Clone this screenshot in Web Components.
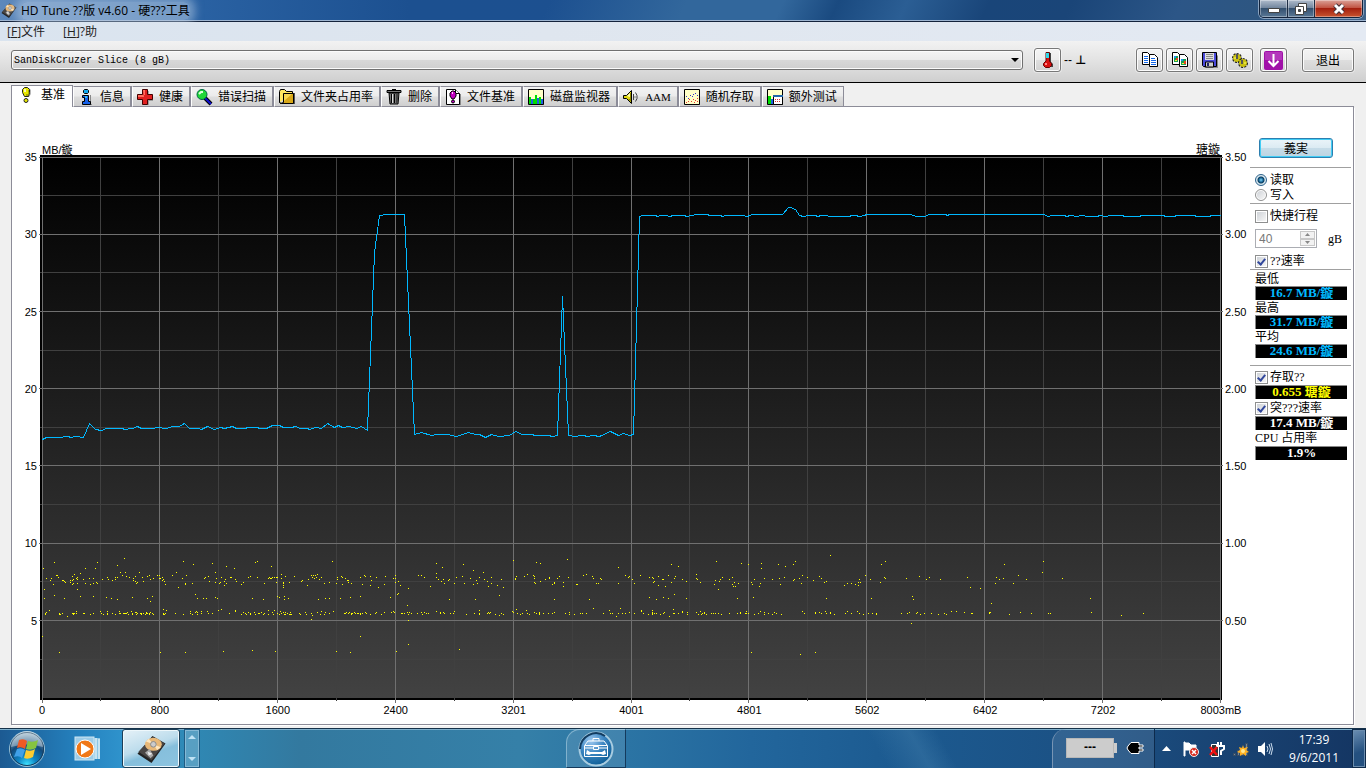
<!DOCTYPE html>
<html lang="zh-CN">
<head>
<meta charset="utf-8">
<title>HD Tune</title>
<style>
html,body{margin:0;padding:0}
body{background:#f0f0f0;font:12px/16px "Liberation Sans","Noto Sans CJK SC",sans-serif;color:#000}
</style>
</head>
<body>
<hd-window>
  <hd-titlebar slot="title">HD Tune ??版 v4.60 - 硬???工具</hd-titlebar>
  <hd-menu slot="menu"></hd-menu>
  <hd-toolbar slot="toolbar"></hd-toolbar>
  <hd-tabs slot="tabs"></hd-tabs>
  <hd-chart slot="chart"></hd-chart>
  <hd-side slot="side"></hd-side>
  <win-taskbar slot="taskbar"></win-taskbar>
</hd-window>
<script>
const define = (name, html, setup) => customElements.define(name, class extends HTMLElement {
  constructor() {
    super();
    this.attachShadow({ mode: "open" }).innerHTML = html;
  }
  connectedCallback() { if (setup) setup(this, this.shadowRoot); }
});

/* 16 x 16 icons */
const ICONS = {
  bang: '<path d="M8 1h3l2 2v4l-2 3H8L6 7V3z" fill="#888" opacity=".6"/><path d="M6.500 .5h3l2 2v3l-1 4h-4l-2-4v-3z" fill="#e8e800" stroke="#222"/><path d="M6 2h2v3H6z" fill="#fff" opacity=".7"/><path d="M10 3v4H8v2h2l1-4V3z" fill="#a8a800"/><circle cx="8" cy="13.500" r="2" fill="#e8e800" stroke="#222"/>',
  info: '<path d="M6 15h8v1H6zM12 6h1v8h-1z" fill="#888"/><path d="M6.500 .5h3l1 1v2l-1 1h-3l-1-1v-2z" fill="#10a8f0" stroke="#000"/><path d="M4.500 6.500h6v6h2v3h-8v-3h2v-4h-2z" fill="#1560e8" stroke="#000"/><path d="M7 7h2v2H7z" fill="#30c0ff"/>',
  plus: '<path d="M6 2h6v4h4v6h-4v4H6z" fill="#777" opacity=".6"/><path d="M5.500 .5h5v5h5v5h-5v5h-5v-5h-5v-5h5z" fill="#e02020" stroke="#400"/><path d="M6 1h2v5H1v2h6z" fill="#ff7060"/>',
  lens: '<path d="M8 8l7 7" stroke="#000" stroke-width="4"/><path d="M8 8l7 7" stroke="#1010d0" stroke-width="2"/><circle cx="6" cy="5.500" r="5" fill="#20d838" stroke="#064"/><path d="M3 5l2-2h2" stroke="#dfd" fill="none" stroke-width="2"/>',
  folder: '<path d="M4 15h12V4h-2z" fill="#555"/><path d="M.5 13.500v-11l1-2h4l2 2h6v2" fill="#ffe860" stroke="#000"/><path d="M.5 13.500l2 1h12v-10H4.500v9l-3 1z" fill="#d8a818" stroke="#000"/><path d="M5 5h8L5 12z" fill="#f8d850"/>',
  bin: '<path d="M1 1.500h14v2H1zM3 4h10l-1 11H4z" fill="#777" stroke="#000"/><path d="M6 0h4v1H6zM5 5h1v9H5zM8 5h1v9H8z"/><path d="M6 5h1v9H6z" fill="#ddd"/><path d="M10 5h2v9h-2z" fill="#444"/>',
  docbang: '<path d="M14 5h2v11H3v-1h11z" fill="#888"/><path d="M1.500 .5h9l4 4v11h-13z" fill="#fff" stroke="#000"/><path d="M10.500 .5v4h4" fill="#fff" stroke="#000"/><path d="M7 2h2l2 2v3l-2 3H7L5 7V4z" fill="#c000c0" stroke="#000"/><path d="M7 3h1v2H7z" fill="#fcf"/><circle cx="8" cy="12.500" r="1.500" fill="#c000c0" stroke="#000"/>',
  bars: '<path d="M3 16h13V3h-2z" fill="#999"/><path d="M.5 .5h15v15H.5z" fill="#ffffc8" stroke="#000"/><path d="M1 8h2v7H1zM5 10h3v5H5zM7 6h2v9H7zM11 8h2v7h-2z" fill="#0d0"/><path d="M3 10h2v5H3zM9 9h2v6H9zM13 10h2v5h-2z" fill="#2060e0"/>',
  horn: '<path d="M.5 6.500h3l5-5v13l-5-5h-3z" fill="#e0d810" stroke="#000"/><path d="M4 7l3-3v4z" fill="#ffa"/><path d="M7 4h1v9l-3-3h2z" fill="#908800"/><path d="M10.500 5v6M12.500 3.500l1.500 3v3l-1.500 3" stroke="#444" fill="none"/><path d="M12 7v2" stroke="#888"/>',
  dots: '<path d="M3 16h13V3h-2z" fill="#999"/><path d="M.5 .5h15v15H.5z" fill="#ffffc8" stroke="#000"/><path d="M2 7h1v1H2zM4 9h1v1H4zM6 6h1v1H6zM8 7h1v1H8zM11 4h1v1h-1zM13 6h1v1h-1zM9 5h1v1H9z" fill="#33c"/><path d="M2 13h1v1H2zM4 12h1v1H4zM7 12h1v1H7zM9 10h1v1H9zM11 11h1v1h-1zM13 9h1v1h-1zM10 13h1v1h-1zM5 10h1v1H5zM13 12h1v1h-1z" fill="#e33"/>',
  extra: '<path d="M3 16h13V3h-2z" fill="#999"/><path d="M.5 .5h15v15H.5z" fill="#ffffc8" stroke="#000"/><path d="M1 7h3v8H1z" fill="#0d0"/><path d="M4 10h2v5H4z" fill="#2060e0"/><path d="M6.500 6.500h9v9h-9z" fill="#fff" stroke="#000"/><path d="M6 6h10v2H6z" fill="#26a"/><path d="M8 10h1v1H8zM10 10h1v1h-1zM12 10h1v1h-1zM8 12h1v1H8zM10 12h1v1h-1zM12 12h1v1h-1z" fill="#d33"/>',
  thermo: '<path d="M8 1h3v9l2 2v3H8z" fill="#444"/><path d="M6 .5h3.500V9l2 2.500v2l-2 2h-4l-2-2v-2L6 9z" fill="#d81010" stroke="#600"/><path d="M6 1h3v5H6z" fill="#30d8e8"/><path d="M5 11h2v2H5z" fill="#f88"/>',
  copy: '<path d="M8 15h8V5z" fill="#888"/><path d="M.5 .5h5l2 2v10h-7zM7.500 2.500h5l3 3v9h-8z" fill="#fff" stroke="#000"/><path d="M2 4h4v1H2zM2 6h4v1H2zM2 8h4v1H2zM2 10h4v1H2zM9 6h4v1H9zM9 8h5v1H9zM9 10h5v1H9zM9 12h5v1H9z" fill="#1468e8"/>',
  copypic: '<path d="M8 15h8V5z" fill="#888"/><path d="M.5 .5h5l2 2v10h-7zM7.500 2.500h5l3 3v9h-8z" fill="#fff" stroke="#000"/><path d="M2 4h4v6H2zM9 7h5v6H9z" fill="#16a050"/><path d="M2 4h2v2H2zM9 7h2v2H9z" fill="#2090f0"/><path d="M4 6h2v2H4zM12 9h2v3h-2z" fill="#e84020"/><path d="M3 8h2v1H3zM10 11h2v1h-2z" fill="#fe3"/>',
  disk: '<path d="M2 16h14V3z" fill="#888"/><path d="M.5 .5h14v14h-13l-1-1z" fill="#4848d8" stroke="#000"/><path d="M3 1h9v7H3z" fill="#ddd"/><path d="M4 2h7v1H4zM4 4h7v1H4zM4 6h7v1H4z" fill="#888"/><path d="M3.500 10h8v5h-8z" fill="#ccc" stroke="#000"/><path d="M5 11h2v3H5z" fill="#226"/>',
  gear: '<g fill="#c8c010" stroke="#222"><circle cx="5" cy="6" r="4" stroke-dasharray="2 1" stroke-width="2"/><circle cx="5" cy="6" r="3.500" stroke="#c8c010"/><circle cx="11" cy="11" r="4" stroke-dasharray="2 1" stroke-width="2"/><circle cx="11" cy="11" r="3.500" stroke="#c8c010"/></g><path d="M5 2v5M10 8v4" stroke="#555" stroke-width="2"/><path d="M2 6h2M12 11h2" stroke="#ff6"/>'
};
customElements.define("px-icon", class extends HTMLElement {
  connectedCallback() {
    if (!this.shadowRoot) this.attachShadow({ mode: "open" });
    this.shadowRoot.innerHTML = `<style>:host{display:block;width:16px;height:16px;flex:none}svg{display:block;overflow:visible}</style><svg width="16" height="16" viewBox="0 0 16 16" aria-hidden="true">${ICONS[this.getAttribute("name")]}</svg>`;
  }
});

const DRIVE = '<path d="M1 20L17 1l14 8-15 21z" fill="#222"/><path d="M2 18L17 2l13 7-14 18z" fill="#4a4644"/><ellipse cx="18" cy="10" rx="9" ry="7" fill="#e8b878"/><path d="M18 10l-8-3 3-3zM18 10l8 3-4 3z" fill="#ffe6bc"/><circle cx="18" cy="10" r="3" fill="#ccc" stroke="#888"/><path d="M9 19l5-4 4 7-3 3z" fill="#aaa"/><path d="M12 18l5 2-4 2z" fill="#eee"/>';

define("hd-window", `<style>
:host{display:flex;flex-direction:column;min-height:100vh;background:#f0f0f0}
main{flex:1;display:flex;flex-direction:column;padding:2px 12px 3px 11px}
.panel{flex:1;display:flex;background:#fff;border:1px solid #8c8c98;border-top:0;box-shadow:1px 1px #fff}
::slotted([slot=chart]){flex:1;min-width:0}
</style><slot name="title"></slot><slot name="menu"></slot><slot name="toolbar"></slot>
<main><slot name="tabs"></slot><div class="panel"><slot name="chart"></slot><slot name="side"></slot></div></main>
<slot name="taskbar"></slot>`);

define("hd-titlebar", `<style>
:host{display:flex;align-items:center;height:22px;box-sizing:border-box;padding:0 3px 0 1px;gap:4px;border-bottom:1px solid #14233c;box-shadow:inset 0 -1px #9db4d0;
font:12px/18px "Open Sans","Noto Sans CJK TC",sans-serif;
background:linear-gradient(115deg,transparent 40%,#32679c 50%,#32679c 57%,#1a4a80 61%,#2b5e94 66%,#194579 72%,#1a4578 78%,#2c5687 86%,#2e5680 93%,#3f6288),linear-gradient(90deg,#5d88bc,#2a62a3 14%,#1c5090 30%,#1d5090)}
.name{flex:1;height:18px}
.name span{display:inline-block;background:rgba(190,210,232,.5);box-shadow:0 0 8px 5px rgba(190,210,232,.5);border-radius:6px;height:18px}
.btns{display:flex;align-self:flex-start;height:18px;box-sizing:border-box;border:1px solid #12233c;border-top:0;border-radius:0 0 5px 5px;overflow:hidden;box-shadow:0 0 0 1px #8ba3bf}
button{border:0;padding:0;margin:0;width:28px;border-right:1px solid #1c2c44;background:linear-gradient(#b0bccc,#73879f 45%,#34506f 50%,#5a7896);display:grid;place-items:center;box-shadow:inset 0 0 0 1px rgba(255,255,255,.35)}
button:nth-child(2){width:27px}
button.x{width:47px;border:0;background:linear-gradient(#dba298,#c25544 45%,#a4200f 50%,#c8542f)}
</style><svg width="16" height="16" viewBox="0 0 32 32">${DRIVE}</svg><div class="name"><span><slot></slot></span></div>
<div class="btns"><button aria-label="最小化"><svg width="12" height="12"><path d="M.5 5.500h11v4H.5z" fill="#fff" stroke="#444"/></svg></button><button aria-label="还原"><svg width="12" height="12"><path d="M3.500.5h8v8h-8z" fill="#fff" stroke="#444"/><path d="M.5 3.500h8v8h-8z" fill="#fff" stroke="#444"/><path d="M3.500 6.500h2v2h-2z" fill="#456" stroke="#444"/></svg></button><button class="x" aria-label="关闭"><svg width="14" height="12"><path d="M3 2l8 8M11 2l-8 8" stroke="#423038" stroke-width="5"/><path d="M3 2l8 8M11 2l-8 8" stroke="#fff" stroke-width="3"/></svg></button></div>`);

define("hd-menu", `<style>
:host{display:flex;height:19px;padding-left:7px;gap:18px;background:linear-gradient(90deg,#dae4ef,#dfe6ef 40%,#e4eaf3)}
button{border:0;background:none;padding:0;font:12px/17px "Open Sans","Noto Sans CJK TC",sans-serif;color:#222}
</style><button>[<u>F</u>]文件</button><button>[<u>H</u>]?助</button>`);

define("hd-toolbar", `<style>
:host{display:flex;align-items:center;height:42px;box-sizing:border-box;padding:0 12px 3px 11px;background:linear-gradient(#f2f2f2,#e2e2e2 50%,#cfcfcf);border-bottom:1px solid #000}
.combo{flex:1;position:relative;height:20px}
select{appearance:none;width:100%;height:20px;box-sizing:border-box;border:1px solid #707070;border-radius:3px;background:linear-gradient(#f4f4f4,#ebebeb 48%,#d8d8d8 52%,#cfcfcf);box-shadow:inset 0 0 0 1px #fbfbfb;padding:1px 2px 0;font:10px/16px "Liberation Mono",monospace;color:#000;display:block}
.combo svg{position:absolute;right:4px;top:8px;pointer-events:none}
button{height:24px;width:27px;box-sizing:border-box;border:1px solid #787878;border-radius:3px;padding:0;display:grid;place-items:center;background:linear-gradient(#f4f4f4,#ececec 48%,#dedede 52%,#d2d2d2);box-shadow:inset 0 0 0 1px #fcfcfc,0 0 0 1px rgba(255,255,255,.4);color:#000}
.temp{margin-left:11px}
output{width:72px;padding-left:3px;font:12px/16px "Liberation Sans","DejaVu Sans",sans-serif}
.set{display:flex;gap:3px}
.down{margin:0 15px 0 7px}
.exit{width:52px;font:12px/18px "Noto Sans CJK SC",sans-serif}
</style><div class="combo"><select aria-label="磁盘"><option>SanDiskCruzer Slice (8 gB)</option></select><svg width="8" height="5"><path d="M0 0h8L4 4z"/></svg></div>
<button class="temp" aria-label="温度"><px-icon name="thermo"></px-icon></button><output>-- <b>⊥</b></output>
<div class="set"><button aria-label="复制"><px-icon name="copy"></px-icon></button><button aria-label="复制图片"><px-icon name="copypic"></px-icon></button><button aria-label="保存"><px-icon name="disk"></px-icon></button><button aria-label="选项"><px-icon name="gear"></px-icon></button></div>
<button class="down" aria-label="下载"><svg width="19" height="19"><rect width="19" height="19" rx="2" fill="#a010a8"/><path d="M1 1h17v8H1z" fill="#c050c8" opacity=".6"/><path d="M9.500 3v12M4.500 10l5 5 5-5" stroke="#fff" stroke-width="2" fill="none"/></svg></button>
<button class="exit">退出</button>`);

define("hd-tabs", `<style>
:host{display:flex;align-items:flex-end;height:22px;background:linear-gradient(#8c8c98,#8c8c98) bottom/100% 1px no-repeat}
button{display:flex;align-items:center;gap:6px;height:21px;box-sizing:border-box;margin:0;padding:0 6px 0 4px;border:solid #8c8c98;border-width:1px 2px 1px 1px;border-left-color:#fff;background:linear-gradient(#f3f3f3,#ebebeb 48%,#dedede 52%,#cfcfcf);font:12px/18px "Liberation Serif","Noto Sans CJK SC",serif;color:#000;white-space:nowrap}
button[aria-selected=true]{height:22px;gap:7px;padding:0 7px 3px 6px;border-width:1px 1px 0;border-color:#8c8c98;background:#fff}
button:last-child{border-right-width:1px}
.latin{font-size:11px}
</style><button role="tab" aria-selected="true"><px-icon name="bang"></px-icon>基准</button>`, (host, root) => {
  if (root.children.length > 2) return;
  [["info","信息"],["plus","健康"],["lens","错误扫描"],["folder","文件夹占用率"],["bin","删除"],["docbang","文件基准"],["bars","磁盘监视器"],["horn","AAM"],["dots","随机存取"],["extra","额外测试"]].forEach(([icon, label]) => {
    const b = document.createElement("button");
    b.setAttribute("role", "tab");
    if (label === "AAM") b.className = "latin";
    b.innerHTML = `<px-icon name="${icon}"></px-icon>${label}`;
    root.append(b);
  });
});

/* transfer-rate trace, in the chart's own units */
const TRACE = "42,439 46,437 62,437 63,436 68,436 70,437 76,436 83,437 89,423 95,429 101,430 106,428 122,428 124,429 132,428 137,426 141,428 152,428 157,427 166,428 172,426 179,426 184,423 189,428 198,428 201,429 207,426 214,429 220,427 224,428 232,426 236,428 245,428 247,427 257,427 259,428 266,428 272,425 279,425 283,427 291,427 295,426 300,428 307,428 309,429 315,427 321,428 327,423 334,427 338,425 342,427 349,426 356,428 361,426 367,430 374,252 379,215 386,214 404,214 414,434 421,432 431,435 437,434 447,434 456,436 468,432 475,434 479,434 485,437 491,434 498,436 509,435 515,431 522,434 532,434 534,435 548,435 552,436 557,435 562,296 568,435 575,436 580,435 583,435 587,436 593,435 599,436 610,431 618,435 623,433 629,435 633,434 639,216 642,215 655,215 657,216 660,215 666,215 669,216 673,215 684,215 686,216 691,215 696,214 707,214 709,215 720,215 722,216 725,215 743,215 746,216 750,215 751,214 782,214 788,207 790,207 795,209 799,215 803,216 808,215 815,215 817,216 821,215 826,215 829,216 849,216 851,215 856,215 858,216 860,216 863,215 867,214 910,214 916,216 925,216 928,214 945,214 947,215 949,214 1043,214 1048,216 1051,215 1064,215 1066,216 1070,215 1076,216 1081,215 1088,216 1097,216 1099,215 1105,216 1110,215 1122,215 1124,216 1139,216 1141,215 1163,215 1165,216 1174,216 1176,215 1194,215 1196,216 1209,216 1211,215 1220,215";
/* access-time samples: three per chart unit, one block for each third of the run */
const SAMPLES = [
[30, `73,52 203,52 283,40 263,61 40,70 166,70 197,70 460,49 490,58 547,55 589,64 613,70 676,52 682,49 724,64 907,49
49,100 61,106 64,100 70,118 79,91 82,91 85,97 97,106 100,106 103,109 107,112 121,112 121,106 127,94 127,106 127,118 130,103 133,88 130,115 139,100 142,97 142,103 142,115 151,85 160,103 166,115 178,100 181,118 190,100 190,115 199,112 203,115 43,133 142,133 217,103 232,97 235,103 248,106 256,103 256,97 263,97 271,82 277,91 286,82 289,94 298,97 310,100 310,106 316,109 316,94 319,115 322,112 328,82 337,97 340,109 352,94 358,91 361,103 370,100 382,91 388,91 388,100 391,100 397,97 397,106 403,109 406,118 400,103 427,91 439,82 445,127 457,100 466,115 466,118 469,91 487,115 523,100 526,97 535,94 538,109 556,82 556,112 559,100 568,115 571,112 574,97 583,109 586,103 583,121 589,115 601,97 604,97 616,103 619,109 634,118 640,112 655,97 661,94 682,97 703,115 715,100 718,97 721,100 724,100 727,97 733,97 739,97 739,112 742,97 754,88 754,100 760,112 760,115 760,121 760,127 766,94 778,112 793,94 814,109 817,106 832,121 835,103 844,91 847,97 850,91 853,100 856,91 859,97 862,88 868,103 874,97 883,115 898,112 919,115 922,97 922,103 934,94 937,97 937,118 946,100 952,106 955,112 955,106 964,115 991,97 997,118 1003,91 1006,94 1021,94 1021,121 1024,106 1039,97 1045,127 1063,118 1066,94 1090,100 1096,91 1096,112 1096,100 1105,109 1111,121 1135,130 1165,91 1174,91 1183,97
43,160 73,151 103,160 151,154 190,154 229,157 244,160 263,163 307,157 352,160 361,169 367,154 496,148 502,160 520,160 529,160 556,157 562,160 667,160 700,163 742,154 748,157 763,154 763,163 775,160 865,163 886,160 898,160 931,160 961,157 991,154 1081,157 1102,148 1105,145 1132,181
37,274 88,322 112,214 391,322 466,322 580,319 667,316 736,319 844,223 847,211 919,319 961,322 991,274 1099,319 1135,298 1135,226
46,208 49,202 46,205 58,196 88,205 91,208 88,208 97,205 127,205 130,208 130,205 133,205 139,199 139,205 160,205 163,205 181,208 190,205 211,199 214,205 220,208 232,199 232,208 232,205 248,205 256,208 268,199 268,205 271,205 280,205 283,205 286,205 289,205 292,202 295,208 304,199 307,208 307,205 316,202 319,208 319,202 322,205 331,205 334,205 334,208 340,205 346,208 349,202 349,205 352,205 358,208 358,205 361,202 367,205 370,208 400,193 400,205 400,208 403,208 409,196 406,205 436,205 460,208 481,199 481,205 487,208 496,202 499,199 502,208 502,202 514,199 514,205 532,199 535,205 547,205 565,196 574,193 598,205 616,196 616,199 634,208 640,202 646,205 649,208 655,202 661,205 661,208 673,202 676,208 685,205 688,205 694,202 700,208 703,205 715,196 715,208 727,202 733,196 730,208 742,205 748,208 751,199 754,205 760,202 763,208 766,202 766,208 772,205 778,208 781,202 781,208 784,208 808,205 811,208 826,202 829,208 844,205 862,202 871,208 874,199 883,208 886,202 898,205 910,199 943,205 946,205 949,202 955,205 958,202 964,208 964,205 967,205 973,202 976,205 982,205 985,205 991,208 991,205 997,205 1006,202 1009,205 1021,208 1036,205 1039,202 1054,208 1063,202 1084,202 1090,199 1093,202 1114,205 1117,205 1123,205 1132,202 1135,208 1138,202 1144,205 1162,205 1174,202 1177,208 1183,202 1189,205 1195,205`],
[430, `19,55 37,67 100,58 130,76 160,82 250,46 319,52 331,55 412,43 565,67 724,58 745,64 859,49 934,55 955,58 994,55 994,70 1045,58 1066,64 1090,58 1096,49
1,124 19,85 19,97 25,103 34,109 40,103 43,115 55,106 58,103 73,115 79,97 97,94 103,115 121,100 130,118 139,106 142,115 148,97 163,103 172,109 175,124 184,97 184,115 202,121 214,103 220,127 256,100 256,103 259,94 283,94 292,88 310,91 313,94 313,100 313,112 316,115 331,109 346,103 358,97 358,100 367,118 373,112 373,115 382,100 388,94 400,112 400,124 415,97 439,118 442,118 460,91 469,88 487,94 490,100 499,115 505,115 511,100 514,103 565,115 586,91 595,97 598,94 607,103 613,115 631,91 658,97 667,97 670,100 670,112 673,109 685,94 685,121 697,103 700,103 706,124 715,91 724,112 733,100 736,94 757,103 769,109 799,88 799,100 802,103 811,112 853,118 856,106 865,133 868,109 871,103 877,97 898,103 907,97 907,118 910,124 913,112 916,124 925,115 964,112 967,118 973,103 988,124 991,115 1003,100 1027,103 1048,100 1051,118 1063,97 1090,106 1093,103 1108,100 1114,115 1117,91 1132,97 1150,106 1168,94 1174,100 1183,112 1189,109
58,163 136,163 208,151 373,163 478,163 658,157 679,163 700,157 715,160 733,148 769,160 922,160 970,157 1189,160
19,199 31,202 31,205 40,202 43,205 61,205 70,205 73,199 109,208 133,205 148,196 148,205 148,208 172,205 175,202 178,205 181,202 196,208 208,211 214,205 220,208 247,199 250,202 259,193 262,205 271,208 277,205 289,196 292,205 298,208 313,202 319,205 328,202 328,205 328,208 340,205 355,205 367,205 373,202 406,205 418,202 418,208 433,208 451,205 457,205 469,205 490,190 520,205 538,196 541,205 547,205 559,214 565,205 571,190 577,205 586,205 598,202 613,205 634,196 634,199 640,205 655,208 667,196 667,202 667,205 667,208 673,205 679,205 691,208 700,205 703,202 718,214 730,193 730,205 733,205 745,205 757,199 757,202 772,202 772,208 799,202 805,208 811,199 814,208 817,205 823,202 823,205 829,208 844,205 850,205 856,205 865,205 874,208 898,205 922,205 931,202 931,205 946,205 949,199 949,205 955,205 973,208 985,205 991,199 1003,202 1003,208 1015,205 1027,208 1033,202 1039,205 1054,208 1117,199 1123,205 1156,202 1156,205 1168,202 1174,205 1186,199 1189,205
88,313 964,322 1111,328 1156,322`],
[830, `1,31 154,58 166,49 523,58 640,49 637,82 43,121 52,115 64,115 76,118 85,112 85,121 88,103 91,112 106,91 121,103 151,112 163,97 166,100 229,100 268,94 289,103 298,97 331,103 412,97 421,127 451,130 496,115 499,97 508,103 520,100 550,115 565,91 589,103 697,100 124,160 247,154 250,163 781,160 484,175 1,202 1,205 13,208 46,205 52,199 64,205 82,199 88,205 100,208 115,205 127,205 139,205 139,208 214,205 232,205 238,202 259,205 262,202 271,208 283,205 304,205 325,208 343,205 349,208 364,199 379,199 403,202 424,205 427,205 478,202 478,205 481,202 538,208 571,202 604,205 655,205 661,205 784,202 874,211 940,205 244,235`]];

define("hd-chart", `<style>
:host{display:grid;grid-template-columns:28px minmax(0,1fr) 28px;grid-template-rows:48px minmax(0,1fr) 24px;font:11px/12px "Liberation Sans","Noto Sans CJK SC",sans-serif}
.units{grid-column:2;display:flex;justify-content:space-between;align-items:flex-end;padding:0 2px;position:relative;z-index:1}
.units span{height:11px}
.units span:last-child{font-size:12px}
.scale{display:flex;flex-direction:column;margin:-4px 0 8px}
.scale span{flex:1}
.left{grid-column:1;grid-row:2;text-align:right;padding-right:3px}
.right{grid-column:3;grid-row:2;padding-left:3px}
.plot{grid-column:2;grid-row:2;min-height:200px;position:relative}
svg{position:absolute;width:100%;height:100%;overflow:visible;display:block}
.foot{grid-column:2;grid-row:3;padding:4px 1px 0 2px}
.run{display:flex;margin:0 -5%}
.run span{flex:1;width:0;text-align:center}
</style>
<div class="units"><span>MB/鏇</span><span>瑭鏇</span></div>
<div class="scale left"></div><div class="plot"></div><div class="scale right"></div><div class="foot"><div class="run"></div></div>`, (host, root) => {
  const spans = list => list.map(t => `<span>${t}</span>`).join("");
  root.querySelector(".left").innerHTML = spans([35, 30, 25, 20, 15, 10, 5]);
  root.querySelector(".right").innerHTML = spans(["3.50", "3.00", "2.50", "2.00", "1.50", "1.00", "0.50"]);
  root.querySelector(".run").innerHTML = spans([0, 800, 1600, 2400, 3201, 4001, 4801, 5602, 6402, 7202, "8003mB"]);
  let minor = "", major = "", dots = "";
  for (let i = 0; i <= 20; i++) {
    const x = Math.floor(42 + i * 58.9);
    if (i % 2) minor += `M${x} 157h1v544h-1z`; else major += `M${x} 157h1v546h-1z`;
  }
  for (let i = 0; i < 14; i++) {
    const y = Math.floor(157 + i * 38.62);
    if (i % 2) minor += `M40 ${y}h1181v1H40z`; else major += `M39 ${y}h1184v1H39z`;
  }
  for (const [base, list] of SAMPLES)
    for (const pair of list.trim().split(/\s+/)) {
      const [x, y] = pair.split(",").map(Number);
      dots += `M${base + Math.floor(x / 3)} ${545 + Math.floor(y / 3)}h1v1h-1z`;
    }
  root.querySelector(".plot").innerHTML = `<svg viewBox="40 155 1182 545" preserveAspectRatio="none" shape-rendering="crispEdges" role="img" aria-label="传输速率">
<defs><linearGradient id="g" x2="0" y2="1"><stop stop-color="#000"/><stop offset="1" stop-color="#424242"/></linearGradient></defs>
<path d="M40 155h1182v545H40z"/><path d="M42 157h1179v541H42z" fill="url(#g)"/>
<path d="${minor}" fill="#404040"/><path d="${major}" fill="#707070"/>
<path d="${dots}" fill="#ff0"/>
<polyline points="${TRACE}" transform="translate(.5 .5)" fill="none" stroke="#00b8ff" vector-effect="non-scaling-stroke"/></svg>`;
});

define("hd-readout", `<style>
:host{display:block;height:14px;margin:0 4px 0 5px;background:#000;color:var(--ink,#fff);box-sizing:border-box;border:solid #888;border-width:1px 0 0 1px;font:bold 13px/12px "Liberation Serif","Noto Sans CJK TC",serif;text-align:center;overflow:hidden}
</style><slot></slot>`);

define("hd-side", `<style>
:host{display:block;width:101px;padding:31px 2px 20px 0;font:12px/16px "Liberation Serif","Noto Sans CJK SC",serif}
.start{display:block;width:74px;height:20px;margin:0 0 9px 9px;padding:0;border:1px solid #2c7fb0;border-radius:3px;background:linear-gradient(#eaf4f9,#dcebf3 48%,#c6dce8 52%,#bcd4e2);box-shadow:inset 0 0 0 1px #41cdf5;font:12px/16px "Noto Sans CJK JP",sans-serif;color:#000}
hr{height:1px;border:0;margin:0;background:#a0a0a0}
label,.cap{display:flex;align-items:center;height:16px;padding-left:5px;gap:2px;white-space:nowrap}
.radios{padding:4px 0 1px}
.radios label{height:15px}
.cap{height:15px;padding-top:1px;box-sizing:border-box;margin:0}
.radios + hr + label{margin-top:4px}
input[type=checkbox],input[type=radio]{appearance:none;margin:0;width:13px;height:13px;box-sizing:border-box;border:1px solid #8e8f8f;background:linear-gradient(135deg,#cfd3d8,#f6f6f6) content-box #f4f4f4;padding:1px;flex:none;display:grid;place-items:center}
input[type=radio]{width:12px;height:12px;margin-right:1px;border-radius:50%}
input[type=radio]:checked{border-color:#2c628b;background:radial-gradient(circle at 50% 50%,#7fd8f8 0,#1c6a9c 2px,#0b3c5c 3px,#d8e8f0 4px)}
input[type=checkbox]:checked::after{content:"";width:3px;height:6px;border:solid #31479c;border-width:0 2px 2px 0;transform:rotate(40deg);margin-bottom:2px}
.size{display:flex;align-items:center;height:19px;margin:5px 0 5px 5px}
.spin{display:flex;width:62px;height:19px;box-sizing:border-box;border:1px solid #abadb3;background:#fff}
.spin input{width:44px;border:0;padding:0 0 0 3px;margin:0;box-sizing:border-box;background:none;font:12px/16px "Liberation Sans",sans-serif;color:#787878}
.arrows{width:15px;margin:1px 1px 1px 0;display:flex;flex-direction:column}
.arrows button{flex:1;min-height:0;padding:0;border:1px solid #c8c8c8;background:#f2f2f2;display:grid;place-items:center}
.unit{margin-left:11px}
.end{margin-bottom:1px}
.gap{margin-top:7px}.gap + label{margin-top:3px}
.blue{--ink:#00b8ff}.yellow{--ink:#ff0}
.burst{margin-top:1px}
.cpu{margin-bottom:1px}
</style>
<button class="start">義実</button><hr>
<div class="radios"><label><input type="radio" name="mode" checked>读取</label><label><input type="radio" name="mode">写入</label></div><hr>
<label><input type="checkbox">快捷行程</label>
<div class="size"><div class="spin"><input type="text" value="40" disabled aria-label="行程"><div class="arrows"><button disabled aria-label="增加"><svg width="5" height="3"><path d="M0 3h5L2.500 0z" fill="#888"/></svg></button><button disabled aria-label="减少"><svg width="5" height="3"><path d="M0 0h5L2.500 3z" fill="#888"/></svg></button></div></div><span class="unit">gB</span></div>
<label><input type="checkbox" checked>??速率</label><hr class="end">
<p class="cap">最低</p><hd-readout class="blue">16.7 MB/鏇</hd-readout>
<p class="cap">最高</p><hd-readout class="blue">31.7 MB/鏇</hd-readout>
<p class="cap">平均</p><hd-readout class="blue">24.6 MB/鏇</hd-readout>
<hr class="gap">
<label><input type="checkbox" checked>存取??</label><hd-readout class="yellow">0.655 瑭鏇</hd-readout>
<label class="burst"><input type="checkbox" checked>突???速率</label><hd-readout>17.4 MB/鏇</hd-readout>
<p class="cap cpu">CPU 占用率</p><hd-readout>1.9%</hd-readout>`);

define("win-taskbar", `<style>
:host{display:flex;height:40px;box-sizing:border-box;border-top:1px solid #16324a;box-shadow:inset 0 1px #7fb0cc;color:#fff;align-items:stretch;
background:linear-gradient(60deg,transparent 64%,rgba(90,150,190,.25) 67%,transparent 69%),linear-gradient(90deg,#1c5a92,#2583c0 6%,#2f93cc 9%,#2f88b4 14%,#33799f 22%,#3580a8 38%,#2b74a4 46%,#22669c 55%,#1c5a90 66%,#1b5083 80%,#18406f 92%,#143562)}
button{border:0;padding:0;margin:0;background:none;color:inherit;display:grid;place-items:center}
.orb{width:54px}
.wmp{width:66px}
.task{width:58px;box-sizing:border-box;border:1px solid #1d3f58;border-radius:3px;margin:0 4px 0 2px;background:linear-gradient(160deg,#e6f2f8,#bcdcec 45%,#86bfdc 60%,#8cc4e0);box-shadow:inset 0 0 0 1px #eef8fc}
.roll{width:16px;box-sizing:border-box;border:1px solid #1f5c84;box-shadow:inset 0 0 0 1px #85b9d6;display:flex;flex-direction:column;justify-content:space-between;padding:5px 0;background:rgba(255,255,255,.2)}
.lang{width:60px;box-sizing:border-box;border:1px solid rgba(190,220,235,.5);border-right-color:#143a5c;border-bottom-color:#143a5c;border-radius:14px 0 0 0;background:rgba(255,255,255,.1)}
.lead{flex:365}
.fill{flex:425}
.power{width:103px;box-sizing:border-box;border-left:1px solid #7895b4;border-right:1px solid #0d2a4c;border-radius:14px 0 0 0;background:rgba(255,255,255,.1);display:flex;align-items:center;padding:0 0 1px 13px;gap:12px}
.batt{width:48px;height:20px;background:#ccc;color:#000;box-shadow:inset 0 0 0 1px #b8b8b8;font:bold 12px/18px "Liberation Sans",sans-serif;text-align:center;display:flex;justify-content:center;position:relative}
.batt::after{content:"";position:absolute;left:48px;top:5px;width:3px;height:10px;background:#ccc}
.tray{display:flex;align-items:center;gap:7px;padding:0 16px 0 7px}
.clock{font:12px/18px "Open Sans",sans-serif;text-align:center;padding:2px 13px 0 0}
.show{width:14px;box-sizing:border-box;border:1px solid #0e2a4a;box-shadow:inset 0 0 0 1px #6c8dae;background:linear-gradient(160deg,#6b8eb2,#24507f 60%)}
svg{display:block}
</style>
<button class="orb" aria-label="开始"><svg width="38" height="38" viewBox="0 0 38 38"><defs><radialGradient id="o" cx=".5" cy=".95" r=".9"><stop stop-color="#3fe4ff"/><stop offset=".3" stop-color="#0c84c4"/><stop offset=".65" stop-color="#134a7a"/><stop offset="1" stop-color="#9cb8ca"/></radialGradient></defs><circle cx="19" cy="19" r="17.500" fill="url(#o)" stroke="#9ac0d4"/><circle cx="19" cy="19" r="16.500" fill="none" stroke="#173c5c"/><path d="M3 17a16 16 0 0 1 32 0q-16-5-32 0z" fill="#fff" opacity=".35"/><path d="M11 10q5-2 8 1l-2 8q-4-3-8-1z" fill="#f05a24"/><path d="M20 11q5 2 10-1l-2 8q-5 3-10 1z" fill="#86c440"/><path d="M9 19q4-2 8 1l-3 8q-3-3-8-1z" fill="#40a0e8"/><path d="M18 20q5 2 9-1l-2 8q-5 3-9 1z" fill="#fccc30"/></svg></button>
<button class="wmp" aria-label="媒体播放器"><svg width="26" height="26"><path d="M19 2h7v21h-7z" fill="#8cc6e4"/><path d="M22 2v21M25 3v20" stroke="#fff"/><rect x="1" y="1" width="19" height="23" fill="#9ccce8" stroke="#cfe8f4"/><circle cx="11" cy="13" r="9" fill="#f07818" stroke="#fff"/><path d="M7 7l10 6-10 6z" fill="#fff"/></svg></button>
<button class="task" aria-label="HD Tune"><svg width="31" height="28" viewBox="0 0 32 30">${DRIVE}</svg></button>
<button class="roll" aria-label="滚动"><svg width="8" height="5"><path d="M0 4h8L4 0z" fill="#bfe2f4"/></svg><svg width="8" height="5"><path d="M0 0h8L4 4z" fill="#bfe2f4"/></svg></button>
<div class="lead"></div>
<button class="lang" aria-label="工具"><svg width="36" height="36"><defs><radialGradient id="b" cx=".35" cy=".25" r=".8"><stop stop-color="#9cc8f0"/><stop offset=".5" stop-color="#3a84c0"/><stop offset="1" stop-color="#0b5c94"/></radialGradient></defs><circle cx="18" cy="18" r="16.500" fill="url(#b)" stroke="#a8cce0" stroke-width="2"/><path d="M2 18a16 16 0 0 1 25-13" fill="none" stroke="#123c60" stroke-width="2"/><g fill="none" stroke="#fff"><path d="M6.500 14.500h23v11h-23zM7 14l3-4h16l3 4M15 10V7.500h6V10M6 17h9M20 17h10M15.500 15.500h5v3h-5z"/></g><path d="M9 19l3 2h12l3-2 1 4-3 1-2-1H13l-2 1-3-1z" fill="#fff"/></svg></button>
<div class="fill"></div>
<div class="power"><div class="batt">---</div><svg width="18" height="16"><path d="M5 2.500h8V5h4v2h-4v2h4v2h-4v2.500H5L2 10l-1-2 1-2z" fill="#000" stroke="#fff"/></svg></div>
<div class="tray">
<button aria-label="显示隐藏的图标"><svg width="9" height="5"><path d="M0 5h9L4.500 0z" fill="#fff"/></svg></button>
<button aria-label="操作中心"><svg width="24" height="16"><path d="M6 1h1v14H6zM7 2h4l2 2h5v6h-5l-2-1H7z" fill="#fff" stroke="#fff"/><circle cx="16" cy="11" r="4.500" fill="#d8281c" stroke="#eee"/><path d="M14 9l4 4M18 9l-4 4" stroke="#fff" stroke-width="1.500"/></svg></button>
<button aria-label="电源"><svg width="16" height="16"><path d="M2.500 3.500h7v12h-7z" fill="#333" stroke="#fff"/><path d="M9 1v4M12 1v4M7 5h8v3l-3 2v4" stroke="#fff" stroke-width="2" fill="none"/><path d="M1 6l7 8M8 6l-7 8" stroke="#f01010" stroke-width="2.500"/></svg></button>
<button aria-label="网络"><svg width="18" height="16"><path d="M1.500 12.500h2v2h-2zM5.500 9.500h2v5h-2zM9.500 6.500h2v8h-2zM13.500 2.500h2v12h-2z" fill="#7088a0" stroke="#3a4c60"/><path d="M11 4l1 3 4-1-2 3 3 2-3 1v3l-3-2-3 2V12l-3-1 3-2-1-3 3 1z" fill="#ffb020"/><circle cx="11" cy="10" r="2" fill="#ffe890"/></svg></button>
<button aria-label="音量"><svg width="16" height="16"><path d="M1 5h3l4-4v14l-4-4H1z" fill="#fff"/><path d="M10 5q2 3 0 6M12 3q3 5 0 10M14 2q3 6 0 12" stroke="#cde" fill="none"/></svg></button>
</div>
<div class="clock">17:39<br>9/6/2011</div>
<button class="show" aria-label="显示桌面"></button>`);
</script>
</body>
</html>
